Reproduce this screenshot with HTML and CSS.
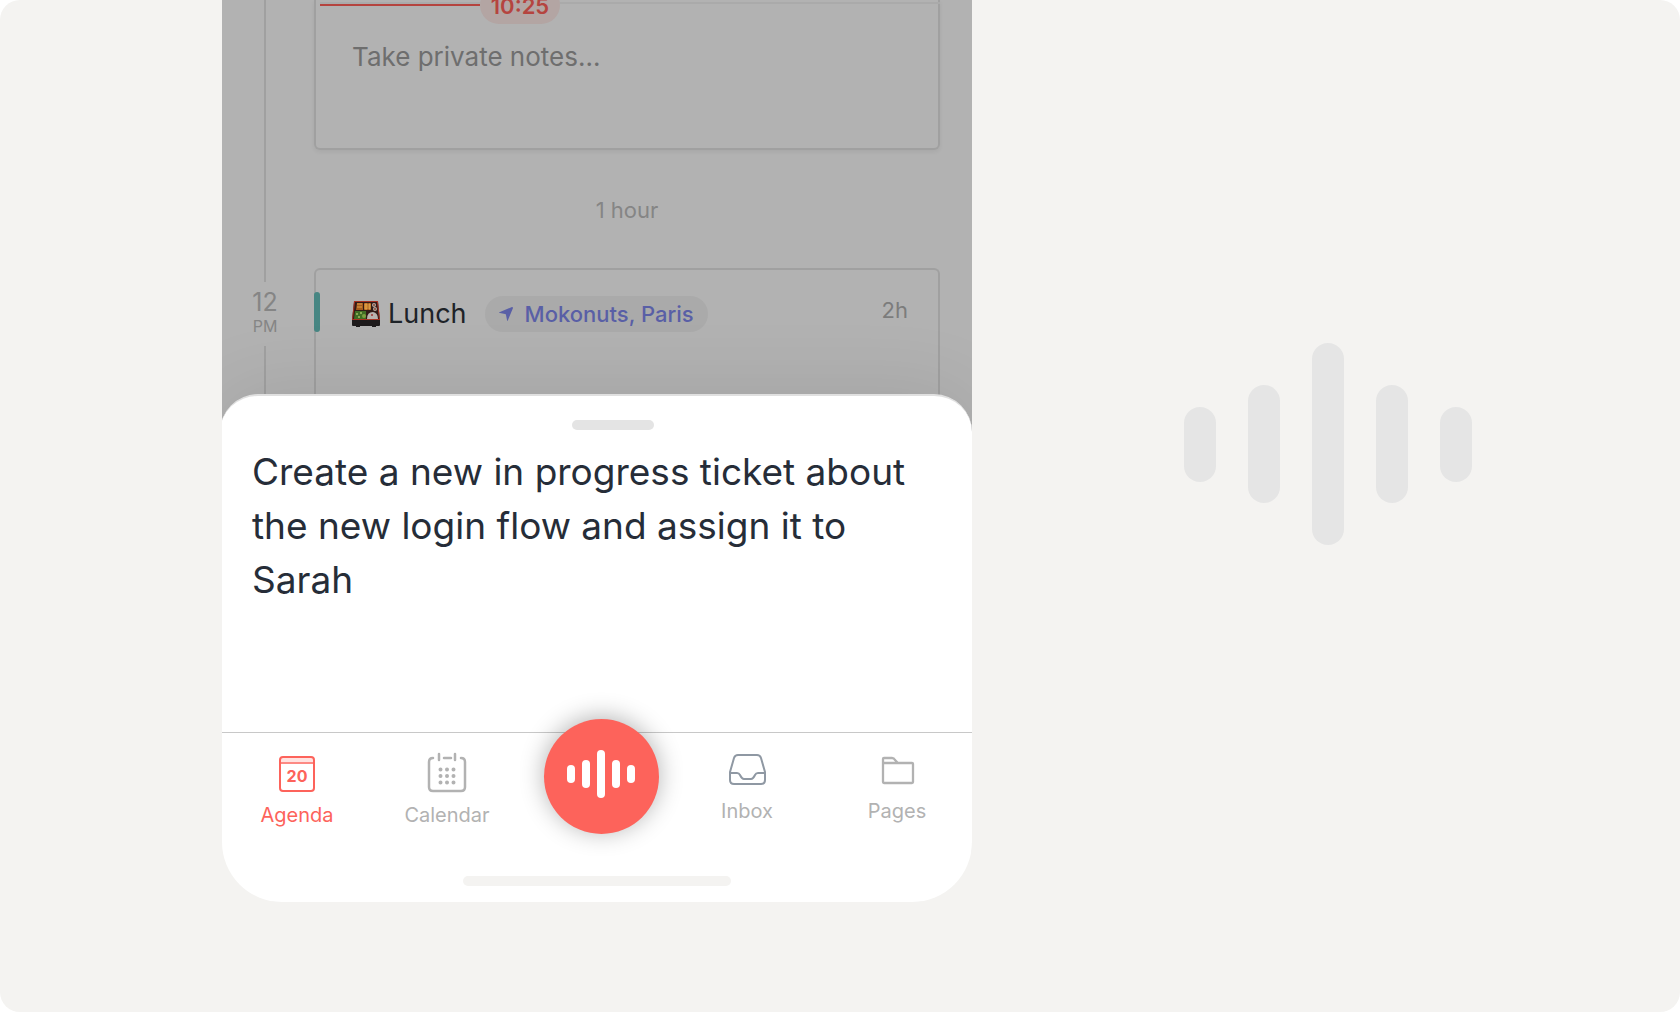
FILE: index.html
```html
<!DOCTYPE html>
<html lang="en">
<head>
	<meta charset="UTF-8">
	<meta name="viewport" content="width=device-width, initial-scale=1.0">
	<title>Agenda</title>
	<link rel="stylesheet" href="styles.css">
</head>

<body>
<main class="stage">
	<div class="phone">
		<section class="agenda">
			<div class="timeline">
				<div class="timeline-line timeline-before"></div>
				<div class="timeline-label">
					<span class="hour">12</span>
					<span class="ampm">PM</span>
				</div>
				<div class="timeline-line timeline-after"></div>
			</div>

			<div class="events">
				<article class="event event-notes">
					<div class="now">
						<div class="now-line past"></div>
						<time class="now-time">10:25</time>
						<div class="now-line rest"></div>
					</div>
					<textarea class="notes" aria-label="Private notes" placeholder="Take private notes..."></textarea>
				</article>

				<div class="gap">1 hour</div>

				<article class="event event-lunch">
					<div class="event-color"></div>
					<h2 class="event-title">
						<svg class="bento" viewBox="0 0 28 26" aria-hidden="true">
							<path d="M2 1h24l2 18v5q0 1-1 1h-3v1h-4v-1H8v1H4v-1H1q-1 0-1-1v-5z" fill="#1d1a1b"/>
							<path d="M2 0h24l2 19H0z" fill="#a83222"/>
							<path d="M3 1h22l2 17H1z" fill="#321b18"/>
							<path d="M5 2h6v7H4zM12 2h7v7h-7z" fill="#a65b1c"/>
							<path d="M5 3h5M5 6h5M13 3h2v5h-2zM17 3h1v5h-1z" stroke="#dba04a" stroke-width="1" fill="#d88a28"/>
							<path d="M3 10h11v8H2z" fill="#3f6d24"/>
							<circle cx="5" cy="13" r="1" fill="#a0bd65"/>
							<circle cx="9" cy="12" r="1" fill="#a0bd65"/>
							<circle cx="12" cy="15" r="2" fill="#7d9d42"/>
							<circle cx="7" cy="16" r="1" fill="#a0bd65"/>
							<circle cx="22" cy="4" r="2" fill="#b9aca5"/>
							<circle cx="23" cy="8" r="2" fill="#b9aca5"/>
							<circle cx="22" cy="4" r="1" fill="#8c4930"/>
							<circle cx="23" cy="8" r="1" fill="#8c4930"/>
							<path d="M15 18q0-7 6-7 5 1 5 7z" fill="#b9b2b0"/>
							<circle cx="20" cy="14" r="1" fill="#9e3431"/>
						</svg>
						Lunch
					</h2>
					<a class="place" href="#">
						<svg class="arrow" viewBox="0 0 14 14" aria-hidden="true"><path d="M13 0q1 0 1 1L9 13q-1 2-1 0L7 8Q7 7 6 7L1 6Q-1 6 1 5z"/></svg>
						Mokonuts, Paris
					</a>
					<span class="duration">2h</span>
				</article>
			</div>
		</section>

		<section class="sheet">
			<div class="handle"></div>
			<p class="transcript">Create a new in progress ticket about the new login flow and assign it to Sarah</p>

			<nav class="tabs">
				<button type="button" class="tab active">
					<svg width="42" height="42" viewBox="0 0 42 42" fill="none" stroke="currentColor" stroke-width="2" aria-hidden="true">
						<path d="M4 10V8q0-3 3-3h28q3 0 3 3v2z" fill="#ffe3e1" stroke="none"/>
						<rect x="4" y="5" width="34" height="34" rx="3"/>
						<path d="M4 11h34" stroke-width="1.500"/>
						<text class="icon-day" x="21" y="30" text-anchor="middle">20</text>
					</svg>
					<span>Agenda</span>
				</button>
				<button type="button" class="tab">
					<svg width="42" height="42" viewBox="0 0 42 42" fill="none" stroke="currentColor" stroke-width="2.500" stroke-linecap="round" aria-hidden="true">
						<path d="M7 6Q3 6 3 10v25q0 4 4 4h28q4 0 4-4V10q0-4-4-4M13 2v6M29 2v6M18 6h7"/>
						<path d="M14.500 17.500h.01M21 17.500h.01M27.500 17.500h.01M14.500 24h.01M21 24h.01M27.500 24h.01M14.500 30.500h.01M21 30.500h.01M27.500 30.500h.01" stroke-width="4"/>
					</svg>
					<span>Calendar</span>
				</button>
				<button type="button" class="record" aria-label="Record">
					<svg width="68" height="48" viewBox="0 0 68 48" fill="currentColor" aria-hidden="true">
						<rect x="0" y="15" width="8" height="18" rx="4"/>
						<rect x="15" y="10" width="8" height="28" rx="4"/>
						<rect x="30" y="0" width="8" height="48" rx="4"/>
						<rect x="45" y="10" width="8" height="28" rx="4"/>
						<rect x="60" y="15" width="8" height="18" rx="4"/>
					</svg>
				</button>
				<button type="button" class="tab">
					<svg width="38" height="38" viewBox="0 0 38 38" fill="none" stroke="#8f98a3" stroke-width="2" stroke-linejoin="round" aria-hidden="true">
						<path d="M10 3h19q3 0 4 3l4 14v8q0 4-4 4H6q-4 0-4-4v-8L6 6q1-3 4-3z"/>
						<path d="M2 21h7q2 0 3 2t2 3 2 1h7q1 0 2-1t2-3 3-2h7"/>
					</svg>
					<span>Inbox</span>
				</button>
				<button type="button" class="tab">
					<svg width="38" height="38" viewBox="0 0 38 38" fill="none" stroke="currentColor" stroke-width="2.300" stroke-linejoin="round" aria-hidden="true">
						<path d="M6 11h28q1 0 1 1v18q0 1-1 1H6q-1 0-1-1V7q0-1 1-1h8q2 0 3 2l3 3M5 11h3"/>
					</svg>
					<span>Pages</span>
				</button>
			</nav>
			<div class="home-bar"></div>
		</section>
	</div>

	<div class="wave">
		<svg width="288" height="204" viewBox="0 0 288 204" fill="#e5e5e5" aria-hidden="true">
			<rect x="0" y="65" width="32" height="75" rx="16"/>
			<rect x="64" y="43" width="32" height="118" rx="16"/>
			<rect x="128" y="1" width="32" height="202" rx="16"/>
			<rect x="192" y="43" width="32" height="118" rx="16"/>
			<rect x="256" y="65" width="32" height="75" rx="16"/>
		</svg>
	</div>
</main>
</body>
</html>
```
FILE: styles.css
```css
* {
	box-sizing: border-box;
}
body {
	margin: 0;
	background: white;
	font-family: Inter, "Liberation Sans", sans-serif;
}
button {
	border: 0;
	padding: 0;
	background: none;
	font: inherit;
	cursor: pointer;
}

.stage {
	display: grid;
	grid-template-columns: 222fr 750fr 708fr;
	align-items: start;
	min-height: 100vh;
	padding-bottom: 110px;
	background: #f4f3f1;
	border-radius: 20px;
}

.phone {
	grid-column: 2;
	overflow: hidden;
	border-radius: 0 0 60px 60px;
}

/* dimmed agenda behind the sheet */
.agenda {
	display: flex;
	height: 436px;
	margin-bottom: -42px;
	padding-right: 32px;
	background: #b2b2b2;
}
.timeline {
	display: flex;
	flex-direction: column;
	align-items: center;
	width: 86px;
	margin-right: 6px;
	color: #858585;
}
.timeline-line {
	width: 2px;
	background: #a0a0a0;
}
.timeline-before {
	height: 282px;
}
.timeline-after {
	flex: 1;
}
.timeline-label {
	display: flex;
	flex-direction: column;
	align-items: center;
	height: 64px;
	padding-top: 6px;
}
.hour {
	font-size: 25px;
	line-height: 28px;
}
.ampm {
	font-size: 16px;
	line-height: 20px;
}

.events {
	display: flex;
	flex-direction: column;
	flex: 1;
	min-width: 0;
}
.event {
	border: 2px solid #a0a0a0;
	border-radius: 6px;
}
.event-notes {
	height: 150px;
	border-top: 0;
	border-radius: 0 0 6px 6px;
	box-shadow: 0 2px 4px rgba(0, 0, 0, 0.06);
}
.now {
	display: flex;
	align-items: center;
	margin: -14px -2px 0 4px;
}
.now-line {
	height: 4px;
	margin-bottom: 2px;
	border-top: 2px solid #aaa;
}
.past {
	flex: 8;
	border-bottom: 2px solid #b5443f;
}
.rest {
	flex: 19;
}
.now-time {
	width: 80px;
	padding-top: 2px;
	background: #b3a5a3;
	border-radius: 20px;
	color: #b5443f;
	font-size: 22px;
	font-weight: 600;
	line-height: 36px;
	text-align: center;
}
.notes {
	display: block;
	width: 100%;
	height: 100px;
	padding: 17px 36px;
	border: 0;
	outline: 0;
	background: none;
	font: inherit;
	font-size: 26px;
	line-height: 32px;
	resize: none;
}
.notes::placeholder {
	color: #6e6e6e;
}
.gap {
	height: 118px;
	padding-top: 46px;
	color: #858585;
	font-size: 22px;
	line-height: 28px;
	text-align: center;
}
.event-lunch {
	display: flex;
	align-items: flex-start;
	flex: 1;
	padding: 22px 30px 0 0;
	border-bottom: 0;
	border-radius: 6px 6px 0 0;
}
.event-color {
	width: 6px;
	height: 40px;
	margin: 0 32px 0 -2px;
	background: #478683;
	border-radius: 3px;
}
.event-title {
	display: flex;
	align-items: center;
	gap: 8px;
	margin: 4px 18px 0 0;
	color: #1e2328;
	font-size: 27px;
	font-weight: 400;
	line-height: 36px;
}
.bento {
	width: 28px;
	height: 26px;
}
.place {
	display: flex;
	align-items: center;
	gap: 12px;
	margin-top: 4px;
	padding: 0 14px;
	background: #aaa;
	border-radius: 18px;
	color: #595fa6;
	font-size: 22px;
	font-weight: 500;
	line-height: 36px;
	text-decoration: none;
}
.arrow {
	width: 14px;
	height: 14px;
	fill: currentColor;
}
.duration {
	margin-left: auto;
	color: #7c7c7c;
	font-size: 22px;
	line-height: 36px;
}

/* voice input sheet */
.sheet {
	position: relative;
	margin-left: -2px;
	padding: 24px 0 16px 2px;
	background: white;
	border-top: 2px solid #e0e0e0;
	border-radius: 38px 38px 0 0;
	box-shadow: 0 0 80px rgba(0, 0, 0, 0.1);
}
.handle {
	width: 82px;
	height: 10px;
	margin-left: calc(50% - 25px);
	background: #e4e4e4;
	border-radius: 5px;
}
.transcript {
	min-height: 302px;
	margin: 0;
	padding: 15px 30px 0;
	color: #262d38;
	font-size: 37px;
	line-height: 54px;
}

.tabs {
	display: grid;
	grid-template-columns: repeat(5, 1fr);
	align-items: start;
	height: 144px;
	border-top: 1px solid #c8c8c8;
}
.tab {
	display: flex;
	flex-direction: column;
	align-items: center;
	gap: 9px;
	padding-top: 19px;
	color: #b2b2b2;
	font-size: 20px;
	line-height: 24px;
}
.active {
	color: #fd635b;
}
.icon-day {
	fill: currentColor;
	stroke: none;
	font-size: 16px;
	font-weight: 700;
}
.record {
	display: flex;
	align-items: center;
	justify-content: center;
	justify-self: center;
	width: 115px;
	height: 115px;
	margin: -14px 0 0 8px;
	padding-bottom: 6px;
	background: #fd635b;
	border-radius: 50%;
	box-shadow: 0 -2px 24px rgba(0, 0, 0, 0.3);
	color: white;
}
.home-bar {
	width: 268px;
	height: 10px;
	margin: 0 auto;
	background: #f4f3f1;
	border-radius: 5px;
}

.wave {
	display: flex;
	justify-content: center;
	align-self: center;
	padding: 0 0 14px 4px;
}
```
